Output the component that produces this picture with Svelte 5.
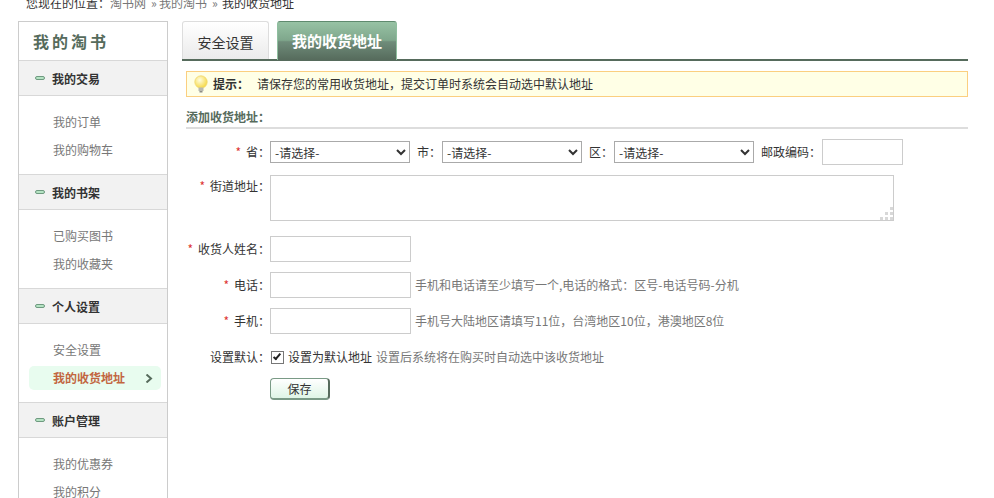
<script>
  const groups = [
    { title: '我的交易', items: ['我的订单', '我的购物车'] },
    { title: '我的书架', items: ['已购买图书', '我的收藏夹'] },
    { title: '个人设置', items: ['安全设置', '我的收货地址'], active: '我的收货地址' },
    { title: '账户管理', items: ['我的优惠券', '我的积分'] }
  ];
  const dots = [[10, 0], [5, 5], [10, 5], [0, 10], [5, 10], [10, 10]];
</script>

<div class="page">
  <div class="crumb">您现在的位置：<span class="link">淘书网</span><span class="sep">»</span><span class="link">我的淘书</span><span class="sep last">»</span>我的收货地址</div>
  <div class="cols">
    <aside class="side">
      <h2>我的淘书</h2>
      {#each groups as g}
        <div class="ghead"><i class="dash"></i><b>{g.title}</b></div>
        <ul>
          {#each g.items as it}
            <li class:on={g.active === it}>
              <span>{it}</span>
              {#if g.active === it}
                <svg width="8" height="9" viewBox="0 0 8 9"><path d="M1.5 .5 L6 4.5 L1.5 8.5" fill="none" stroke="#566b5c" stroke-width="2"/></svg>
              {/if}
            </li>
          {/each}
        </ul>
      {/each}
    </aside>
    <main>
      <div class="tabs">
        <div class="tab">安全设置</div>
        <div class="tab cur">我的收货地址</div>
      </div>
      <div class="body">
        <div class="tip">
          <svg width="16" height="18" viewBox="0 0 16 18">
            <defs><radialGradient id="bulb" cx=".4" cy=".35" r=".7"><stop offset="0" stop-color="#fffde0"/><stop offset="1" stop-color="#f5d63a"/></radialGradient></defs>
            <circle cx="8" cy="7" r="6.2" fill="url(#bulb)" stroke="#f0d870" stroke-width=".8"/>
            <rect x="5.5" y="12.5" width="5" height="3.5" fill="#b9b9b0"/>
            <rect x="6.5" y="16" width="3" height="1.5" fill="#8c8c86"/>
          </svg>
          <b>提示：</b>
          <span>请保存您的常用收货地址，提交订单时系统会自动选中默认地址</span>
        </div>
        <h3>添加收货地址：</h3>
        <div class="row r1">
          <span class="lab"><em>*</em>省：</span>
          <select class="sel"><option>-请选择-</option></select>
          <span class="l2">市：</span>
          <select class="sel"><option>-请选择-</option></select>
          <span class="l2">区：</span>
          <select class="sel"><option>-请选择-</option></select>
          <span class="l2">邮政编码：</span>
          <input class="inp zipi" />
        </div>
        <div class="row r2">
          <span class="lab"><em>*</em>街道地址：</span>
          <div class="ta">
            <textarea></textarea>
            <svg class="grip" width="13" height="13" viewBox="0 0 13 13">
              {#each dots as d}<rect x={d[0]} y={d[1]} width="3" height="3" fill="#d8d8d8"/>{/each}
            </svg>
          </div>
        </div>
        <div class="row r3">
          <span class="lab"><em>*</em>收货人姓名：</span>
          <input class="inp" />
        </div>
        <div class="row r3">
          <span class="lab"><em>*</em>电话：</span>
          <input class="inp" />
          <span class="hint">手机和电话请至少填写一个,电话的格式：区号-电话号码-分机</span>
        </div>
        <div class="row r3">
          <span class="lab"><em>*</em>手机：</span>
          <input class="inp" />
          <span class="hint">手机号大陆地区请填写11位，台湾地区10位，港澳地区8位</span>
        </div>
        <div class="row r4">
          <span class="lab">设置默认：</span>
          <input type="checkbox" checked class="chk" />
          <span class="cl">设置为默认地址</span>
          <span class="hint2">设置后系统将在购买时自动选中该收货地址</span>
        </div>
        <div class="row r5">
          <span class="lab"></span>
          <button>保存</button>
        </div>
      </div>
    </main>
  </div>
</div>

<style>
  :global(body) { margin: 0; background: #fff; }
  .page { width: 994px; height: 498px; overflow: hidden; font: 12px/18px "Noto Sans CJK SC", "Liberation Sans", sans-serif; color: #333; }
  .crumb { margin: -6px 0 0 26px; height: 27px; color: #333; }
  .link { color: #777; }
  .sep { color: #777; margin: 0 3px 0 5px; display: inline-block; width: 5px; }
  .sep.last { margin-right: 5px; }
  .cols { display: flex; align-items: flex-start; padding-left: 18px; }
  .side { width: 148px; border: 1px solid #ccc; flex: none; }
  .side h2 { margin: 0; height: 38px; line-height: 39px; padding-left: 14px; font-size: 16px; font-weight: 700; letter-spacing: 3px; color: #566b5c; border-bottom: 1px solid #d8d8d8; white-space: nowrap; }
  .ghead { height: 34px; box-sizing: content-box; background: #f2f2f2; border-bottom: 1px solid #d8d8d8; display: flex; align-items: center; padding-left: 16px; gap: 7px; }
  .ghead b { font-size: 12px; color: #333; padding-top: 2px; }
  .dash { width: 10px; height: 4px; background: #b5e3c3; border: 1px solid #6f9a80; border-radius: 2px; box-sizing: border-box; }
  ul { list-style: none; margin: 0; padding: 14px 6px 8px 10px; border-bottom: 1px solid #d8d8d8; }
  li { height: 24px; line-height: 24px; margin-bottom: 4px; padding-left: 24px; padding-right: 8px; display: flex; justify-content: space-between; align-items: center; color: #777; border-radius: 5px; }
  li.on { background: #e8fcef; color: #c2663f; font-weight: 700; }
  main { margin-left: 14px; width: 786px; flex: none; }
  .tabs { display: flex; gap: 8px; height: 38px; border-bottom: 2px solid #566b5c; }
  .tab { width: 85px; height: 37px; border: 1px solid #ddd; border-bottom: none; border-radius: 3px 3px 0 0; background: linear-gradient(#fff, #ebebeb); text-align: center; line-height: 40px; font-size: 14px; color: #333; }
  .tab.cur { width: 118px; height: 38px; border: 1px solid #8fbf9f; border-top-color: #5f8a6e; border-bottom: none; background: linear-gradient(#97c2a4 0%, #7fa78c 48%, #6f8c7a 52%, #566b5c 100%); color: #fff; font-weight: 700; font-size: 15px; line-height: 38px; }
  .body { padding: 10px 0 0 4px; }
  .tip { height: 24px; border: 1px solid #fbcf80; background: #ffffe6; display: flex; align-items: center; padding-left: 6px; }
  .tip b { margin: 0 8px 0 4px; color: #333; }
  h3 { margin: 11px 0 0; height: 19px; line-height: 18px; font-size: 12px; font-weight: 700; color: #566b5c; border-bottom: 2px solid #ddd; }
  .row { display: flex; align-items: center; }
  .lab { width: 84px; text-align: right; flex: none; white-space: nowrap; }
  .lab em { color: #d33; font-style: normal; margin-right: 5px; }
  .r1 { margin-top: 10px; height: 26px; }
  .sel { width: 140px; height: 22px; border: 1px solid #aaa; background: #fff; font: inherit; color: #333; padding: 0; box-sizing: border-box; }
  .l2 { margin: 0 1px 0 7px; white-space: nowrap; }
  .inp { width: 141px; height: 26px; border: 1px solid #ccc; box-sizing: border-box; padding: 0 4px; margin: 0; flex: none; }
  .zipi { width: 81px; }
  .r2 { margin-top: 10px; height: 46px; align-items: flex-start; }
  .r2 .lab { margin-top: 2px; }
  .ta { position: relative; width: 624px; height: 46px; }
  textarea { display: block; width: 100%; height: 100%; border: 1px solid #ccc; box-sizing: border-box; margin: 0; padding: 2px; font: inherit; resize: none; }
  .grip { position: absolute; right: 1px; bottom: 1px; }
  .r3 { margin-top: 10px; height: 26px; }
  .r2 + .r3 { margin-top: 15px; }
  .hint { margin-left: 4px; color: #777; }
  .r4 { margin-top: 14px; height: 18px; }
  .chk { appearance: none; position: relative; box-sizing: border-box; margin: 0 4px 0 1px; width: 13px; height: 13px; background: #fff; border: 1px solid #777; }
  .chk::after { content: ""; position: absolute; left: 3px; top: 0; width: 4px; height: 8px; border: solid #222; border-width: 0 2px 2px 0; transform: rotate(40deg); box-sizing: border-box; }
  .hint2 { margin-left: 4px; color: #777; }
  .r5 { margin-top: 12px; }
  button { width: 60px; height: 22px; padding: 0; border: 1px solid #7a9a86; border-right: 2px solid #566b5c; border-bottom: 2px solid #7a9a86; border-radius: 4px; background: linear-gradient(#fff, #dff5e6); font: inherit; color: #333; box-sizing: border-box; }
</style>
